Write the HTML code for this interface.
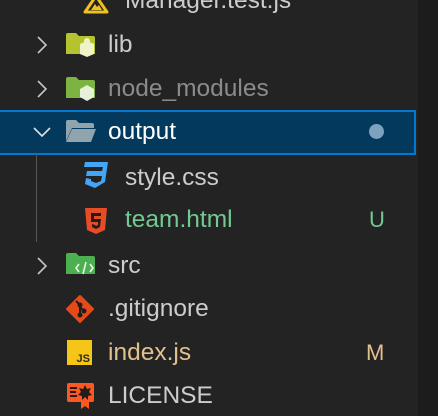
<!DOCTYPE html>
<html><head><meta charset="utf-8"><style>
html,body{margin:0;padding:0;}
body{width:438px;height:416px;background:#232323;position:relative;overflow:hidden;font-family:"Liberation Sans",sans-serif;}
.strip{position:absolute;left:418px;top:0;width:20px;height:416px;background:#1c1c1c;}
.sel{position:absolute;left:0;top:110px;width:414px;height:41px;background:#04395e;border:2px solid #0078d4;border-left:none;}
.t{position:absolute;font-size:24.5px;line-height:28px;color:#cccccc;white-space:nowrap;}
.ic{position:absolute;}
.guide{position:absolute;left:36px;top:154px;width:1px;height:88px;background:#585858;}
</style></head><body>
<div class="strip"></div>
<div class="sel"></div>
<div class="guide"></div>

<svg class="ic" style="left:83px;top:-6px" width="26" height="20" viewBox="0 0 26 20"><path d="M13 2 L24 18 L2 18 Z" fill="none" stroke="#f0c020" stroke-width="3" stroke-linejoin="round"/><path d="M8 16 L12 10 L14 13 L16 11 L19 16Z" fill="#f0c020"/></svg>
<div class="t" style="left:125px;top:-13px">Manager.test.js</div>

<svg class="ic" style="left:36px;top:35px" width="12" height="20"><path d="M2 2 L10 10 L2 18" fill="none" stroke="#c5c5c5" stroke-width="1.6"/></svg>
<svg class="ic" style="left:36px;top:79px" width="12" height="20"><path d="M2 2 L10 10 L2 18" fill="none" stroke="#c5c5c5" stroke-width="1.6"/></svg>
<svg class="ic" style="left:32px;top:126px" width="20" height="12"><path d="M2 2 L10 10 L18 2" fill="none" stroke="#e0e0e0" stroke-width="1.6"/></svg>
<svg class="ic" style="left:36px;top:256px" width="12" height="20"><path d="M2 2 L10 10 L2 18" fill="none" stroke="#c5c5c5" stroke-width="1.6"/></svg>

<svg class="ic" style="left:66px;top:32px" width="30" height="26"><path d="M0 3 Q0 1 2 1 L10 1 L13 4 L27 4 Q29 4 29 6 L29 22 L0 22Z" fill="#b5c42e"/><path d="M14 12 L21 9 L28 12 L28 22 L21 25 L14 22Z" fill="#eef4c8"/><circle cx="21" cy="9" r="3" fill="#eef4c8"/></svg>
<div class="t" style="left:108px;top:31px">lib</div>

<svg class="ic" style="left:66px;top:76px" width="30" height="26"><path d="M0 3 Q0 1 2 1 L10 1 L13 4 L27 4 Q29 4 29 6 L29 22 L0 22Z" fill="#7cb342"/><path d="M21 9 L28 13 L28 21 L21 25 L14 21 L14 13Z" fill="#e6f2d8"/></svg>
<div class="t" style="left:108px;top:75px;color:#8b8b8b">node_modules</div>

<svg class="ic" style="left:66px;top:119px" width="30" height="26"><path d="M0 3 Q0 1 2 1 L10 1 L13 4 L26 4 Q28 4 28 6 L28 9 L6 9 L0 22Z" fill="#90a4ae"/><path d="M6 10 L30 10 L25 23 L0 23Z" fill="#90a4ae"/></svg>
<div class="t" style="left:108px;top:118px;color:#fff">output</div>
<div class="ic" style="left:369px;top:124px;width:15px;height:15px;border-radius:50%;background:#7da2bf"></div>

<svg class="ic" style="left:83px;top:162px" width="26" height="27"><path d="M2 0 L25 0 L22 20 L12 26 L2 22 L3 16 L8 17 L8 19 L13 21 L18 19 L19 14 L3 14 L4 9 L19 9 L20 5 L1 5Z" fill="#42a5f5"/></svg>
<div class="t" style="left:125px;top:164px">style.css</div>

<svg class="ic" style="left:85px;top:208px" width="22" height="26"><path d="M0 0 L22 0 L20 22 L11 26 L2 22Z" fill="#e44d26"/><path d="M6 5 L16 5 L16 8 L9 8 L9 11 L16 11 L15 19 L11 21 L7 19 L7 16 L10 17 L11 18 L13 17 L13 14 L6 14Z" fill="#2a1a16"/></svg>
<div class="t" style="left:125px;top:206px;color:#73c991">team.html</div>
<div class="t" style="left:369px;top:206px;color:#73c991;font-size:22px">U</div>

<svg class="ic" style="left:66px;top:252px" width="30" height="26"><path d="M0 3 Q0 1 2 1 L10 1 L13 4 L27 4 Q29 4 29 6 L29 22 L0 22Z" fill="#4caf50"/><path d="M13 12 L10 16 L13 20 M24 12 L27 16 L24 20 M20 10 L17 22" fill="none" stroke="#e8f5e9" stroke-width="1.6"/></svg>
<div class="t" style="left:108px;top:252px">src</div>

<svg class="ic" style="left:66px;top:295px" width="28" height="28"><path d="M14 1 L27 14 L14 27 L1 14Z" fill="#e64a19" stroke="#e64a19" stroke-width="2" stroke-linejoin="round"/><path d="M10 6 L14 10 L14 20 M14 12 L18 16" stroke="#231c1a" stroke-width="2" fill="none"/><circle cx="14" cy="20" r="2.5" fill="#231c1a"/><circle cx="18" cy="16" r="2.5" fill="#231c1a"/><circle cx="14" cy="10" r="2.5" fill="#231c1a"/></svg>
<div class="t" style="left:108px;top:295px">.gitignore</div>

<svg class="ic" style="left:67px;top:340px" width="25" height="25"><rect width="25" height="25" fill="#f5c518"/><text x="23" y="22" font-family="Liberation Sans" font-weight="bold" font-size="11" text-anchor="end" fill="#2a2a2a">JS</text></svg>
<div class="t" style="left:108px;top:339px;color:#e2c08d">index.js</div>
<div class="t" style="left:366px;top:339px;color:#e2c08d;font-size:22px">M</div>

<svg class="ic" style="left:67px;top:382px" width="28" height="28"><rect x="0" y="1" width="27" height="19" rx="2" fill="#ff5722"/><path d="M3 6 H10 M3 10 H9 M3 14 H10" stroke="#231c1a" stroke-width="2"/><path d="M18 3 L20 7 L24 6 L22 10 L25 13 L21 14 L21 18 L18 15 L15 18 L15 14 L11 13 L14 10 L12 6 L16 7Z" fill="#231c1a"/><path d="M14 19 L14 27 L18 24 L22 27 L22 19Z" fill="#ff5722"/></svg>
<div class="t" style="left:108px;top:382px">LICENSE</div>
</body></html>
